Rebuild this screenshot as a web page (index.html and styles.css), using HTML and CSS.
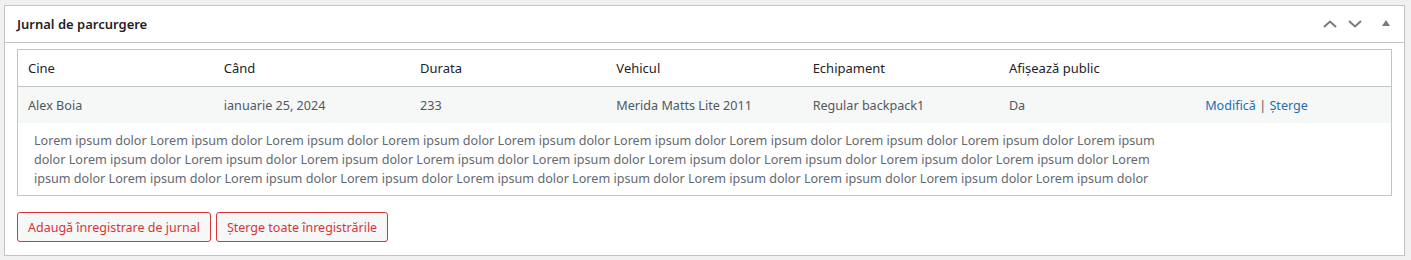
FILE: index.html
```html
<!DOCTYPE html>
<html lang="ro">
<head>
    <meta charset="UTF-8">
    <title>Jurnal de parcurgere</title>
    <link rel="stylesheet" href="styles.css">
</head>
<body>
    <div class="postbox">
        <div class="postbox-header">
            <h2>Jurnal de parcurgere</h2>
            <div class="handle-actions">
                <button class="handle" aria-label="Mută în sus">
                    <svg width="14" height="8" viewBox="0 0 14 8"><path d="M1 7 L7 1.5 L13 7" fill="none" stroke="#787c82" stroke-width="2"/></svg>
                </button>
                <button class="handle" aria-label="Mută în jos">
                    <svg width="14" height="8" viewBox="0 0 14 8"><path d="M1 1 L7 6.5 L13 1" fill="none" stroke="#787c82" stroke-width="2"/></svg>
                </button>
                <button class="handle toggle" aria-label="Comută panoul">
                    <svg width="8" height="6" viewBox="0 0 8 6"><path d="M0 6 L4 0 L8 6 Z" fill="#787c82"/></svg>
                </button>
            </div>
        </div>
        <div class="inside">
            <table class="log-table">
                <thead>
                    <tr>
                        <th>Cine</th>
                        <th>Când</th>
                        <th>Durata</th>
                        <th>Vehicul</th>
                        <th>Echipament</th>
                        <th>Afișează public</th>
                        <th></th>
                    </tr>
                </thead>
                <tbody>
                    <tr class="entry">
                        <td>Alex Boia</td>
                        <td>ianuarie 25, 2024</td>
                        <td>233</td>
                        <td>Merida Matts Lite 2011</td>
                        <td>Regular backpack1</td>
                        <td>Da</td>
                        <td class="row-actions"><a href="#">Modifică</a> | <a href="#">Șterge</a></td>
                    </tr>
                    <tr class="note">
                        <td colspan="6">
                            Lorem ipsum dolor Lorem ipsum dolor Lorem ipsum dolor Lorem ipsum dolor Lorem ipsum dolor
                            Lorem ipsum dolor Lorem ipsum dolor Lorem ipsum dolor Lorem ipsum dolor Lorem ipsum dolor
                            Lorem ipsum dolor Lorem ipsum dolor Lorem ipsum dolor Lorem ipsum dolor Lorem ipsum dolor
                            Lorem ipsum dolor Lorem ipsum dolor Lorem ipsum dolor Lorem ipsum dolor Lorem ipsum dolor
                            Lorem ipsum dolor Lorem ipsum dolor Lorem ipsum dolor Lorem ipsum dolor Lorem ipsum dolor
                            Lorem ipsum dolor Lorem ipsum dolor Lorem ipsum dolor Lorem ipsum dolor
                        </td>
                        <td></td>
                    </tr>
                </tbody>
            </table>
            <div class="actions">
                <button class="button danger">Adaugă înregistrare de jurnal</button>
                <button class="button danger">Șterge toate înregistrările</button>
            </div>
        </div>
    </div>
</body>
</html>
```

FILE: styles.css
```css
body {
    margin: 0;
    padding: 5px 6px 0 4px;
    background: #f0f0f1;
    font-family: "Noto Sans", "Open Sans", sans-serif;
    font-size: 12.6px;
    color: #3c434a;
}
.postbox {
    background: #fff;
    border: 1px solid #c3c4c7;
    height: 249px;
}
.postbox-header {
    display: flex;
    align-items: center;
    justify-content: space-between;
    height: 36px;
    border-bottom: 1px solid #c3c4c7;
}
.postbox-header h2 {
    margin: 0;
    padding-left: 12px;
    font-size: 13px;
    font-weight: 600;
    color: #1d2327;
}
.handle-actions {
    display: flex;
    align-items: center;
}
.handle {
    width: 25px;
    height: 36px;
    padding: 0;
    border: none;
    background: none;
    display: flex;
    align-items: center;
    justify-content: center;
}
.handle.toggle {
    width: 37px;
    padding-bottom: 3px;
}
.inside {
    padding: 6px 12px 12px;
}
.log-table {
    width: 100%;
    table-layout: fixed;
    border-collapse: collapse;
    border: 1px solid #c3c4c7;
}
.log-table th {
    text-align: left;
    font-weight: 400;
    font-size: 13px;
    color: #1d2327;
    height: 36px;
    padding: 0 10px;
    border-bottom: 1px solid #c3c4c7;
}
.log-table td {
    padding: 0 10px;
    color: #50575e;
}
.entry td {
    background: #f6f7f7;
    height: 36px;
}
.row-actions a {
    color: #2271b1;
    text-decoration: none;
}
.note td {
    padding: 8px 20px 7px 16px;
    line-height: 19px;
    color: #646970;
}
.actions {
    display: flex;
    gap: 5px;
    margin-top: 16px;
}
.button {
    font-family: inherit;
    font-size: 12.5px;
    height: 30px;
    padding: 0 10px;
    border-radius: 3px;
    cursor: pointer;
}
.danger {
    color: #d63638;
    border: 1px solid #d63638;
    background: #f6f7f7;
}
```
